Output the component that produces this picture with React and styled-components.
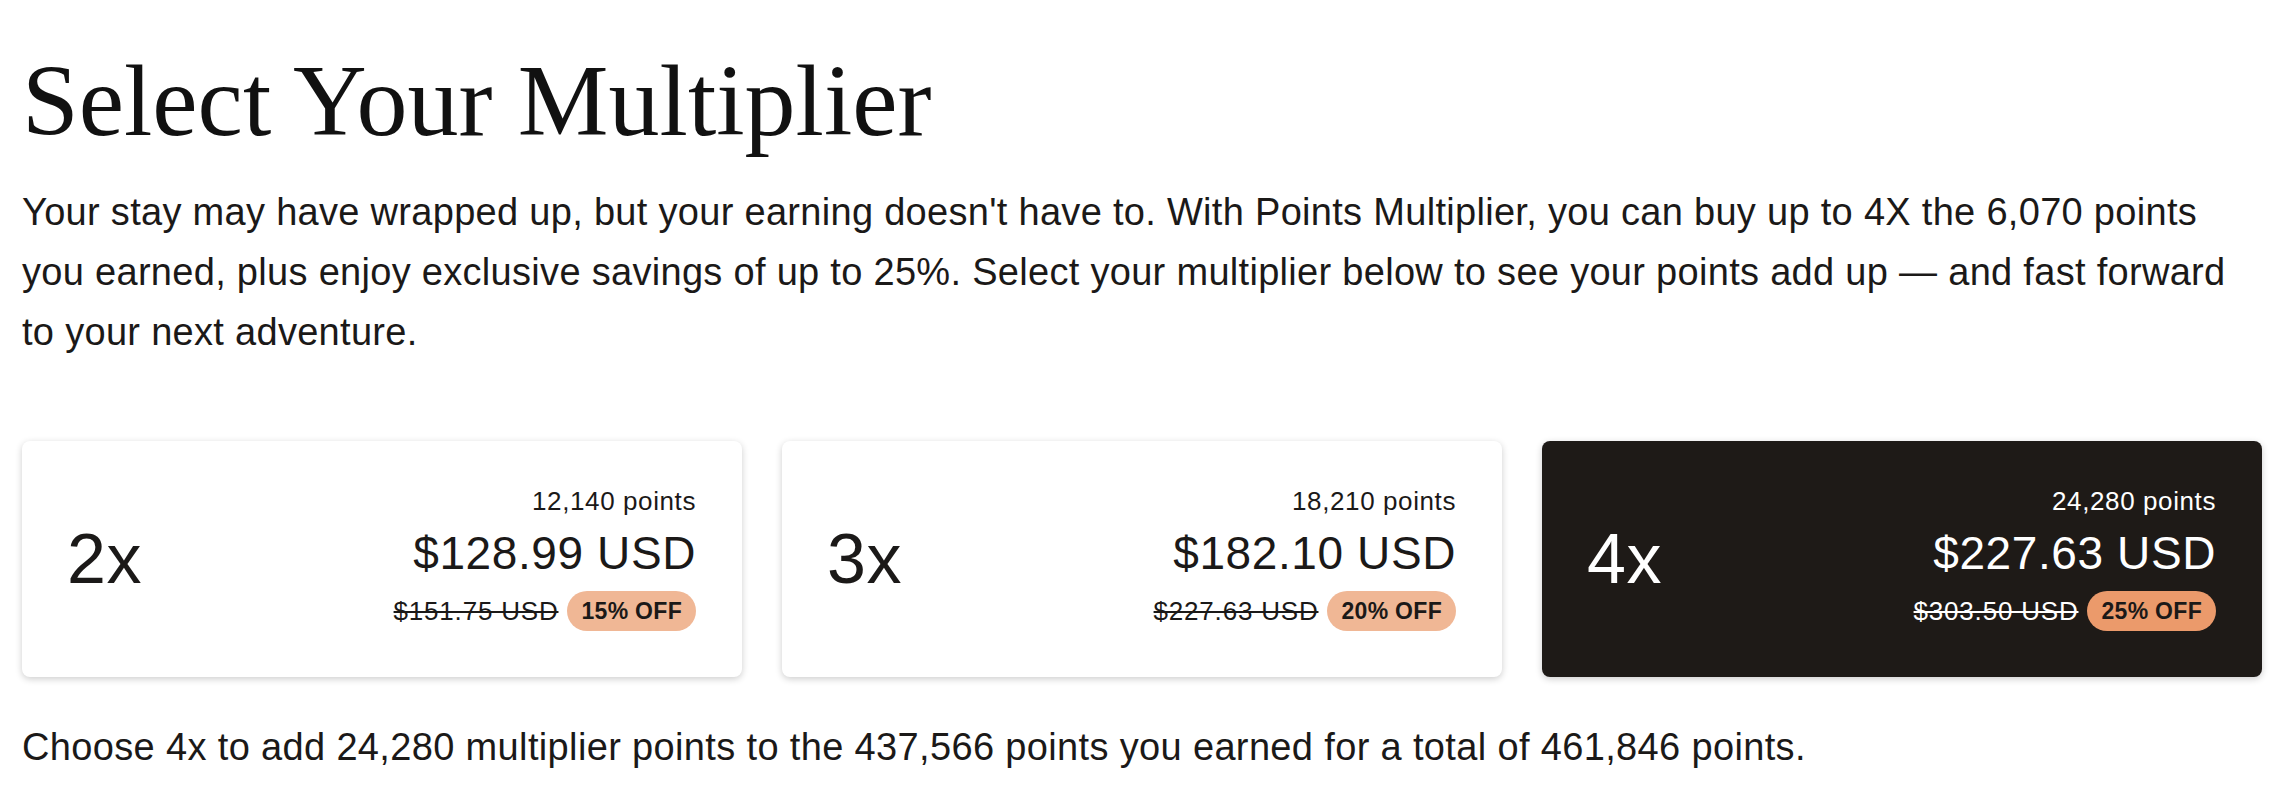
import React from 'react';
import styled, { createGlobalStyle } from 'styled-components';

const GlobalStyle = createGlobalStyle`
  html, body {
    margin: 0;
    padding: 0;
    background: #ffffff;
  }
  body {
    font-family: "Liberation Sans", Arial, sans-serif;
    color: #1b1918;
  }
`;

const Page = styled.main`
  padding: 41px 22px 30px;
  box-sizing: border-box;
  width: 100%;
`;

const Title = styled.h1`
  font-family: "Liberation Serif", "Times New Roman", serif;
  font-weight: 400;
  font-size: 102px;
  line-height: 120px;
  margin: 0;
  color: #111;
`;

const Intro = styled.p`
  font-size: 38px;
  line-height: 60px;
  letter-spacing: 0.3px;
  margin: 21px 0 0;
`;

const Options = styled.section`
  display: grid;
  grid-template-columns: repeat(3, 1fr);
  gap: 40px;
  margin-top: 79px;
`;

const Card = styled.button`
  all: unset;
  box-sizing: border-box;
  height: 236px;
  display: flex;
  align-items: center;
  justify-content: space-between;
  padding: 0 46px 0 45px;
  border-radius: 8px;
  cursor: pointer;
  background: ${p => (p.$selected ? '#1e1a17' : '#ffffff')};
  color: ${p => (p.$selected ? '#ffffff' : '#1b1918')};
  box-shadow: 0 2px 7px rgba(0, 0, 0, 0.2);
  font-family: "Liberation Sans", Arial, sans-serif;
`;

const Multiple = styled.span`
  font-size: 70px;
  line-height: 1;
  letter-spacing: 0.5px;
`;

const Pricing = styled.div`
  display: flex;
  flex-direction: column;
  align-items: flex-end;
  gap: 12px;
`;

const Points = styled.span`
  font-size: 26px;
  line-height: 28px;
  letter-spacing: 0.6px;
`;

const Price = styled.span`
  font-size: 46px;
  line-height: 52px;
  letter-spacing: 0.6px;
`;

const Savings = styled.div`
  display: flex;
  align-items: center;
  gap: 9px;
  height: 40px;
`;

const Original = styled.s`
  font-size: 26px;
  line-height: 28px;
  letter-spacing: 0.8px;
`;

const Badge = styled.span`
  display: inline-flex;
  align-items: center;
  height: 40px;
  padding: 0 14px;
  border-radius: 20px;
  font-size: 23px;
  font-weight: 700;
  letter-spacing: 0.3px;
  color: #1b1918;
  background: ${p => (p.$strong ? '#eb9a6b' : '#f0b795')};
`;

const Summary = styled.p`
  font-size: 38px;
  line-height: 60px;
  letter-spacing: 0.35px;
  margin: 40px 0 0;
`;

const options = [
  { mult: '2x', points: '12,140', price: '$128.99 USD', was: '$151.75 USD', off: '15% OFF' },
  { mult: '3x', points: '18,210', price: '$182.10 USD', was: '$227.63 USD', off: '20% OFF' },
  { mult: '4x', points: '24,280', price: '$227.63 USD', was: '$303.50 USD', off: '25% OFF' },
];

export default function App() {
  const selected = '4x';
  return (
    <>
      <GlobalStyle />
      <Page>
        <Title>Select Your Multiplier</Title>
        <Intro>
          Your stay may have wrapped up, but your earning doesn't have to. With Points
          Multiplier, you can buy up to 4X the 6,070 points you earned, plus enjoy exclusive
          savings of up to 25%. Select your multiplier below to see your points add up — and
          fast forward to your next adventure.
        </Intro>
        <Options>
          {options.map(o => {
            const isSel = o.mult === selected;
            return (
              <Card key={o.mult} $selected={isSel}>
                <Multiple>{o.mult}</Multiple>
                <Pricing>
                  <Points>{o.points} points</Points>
                  <Price>{o.price}</Price>
                  <Savings>
                    <Original>{o.was}</Original>
                    <Badge $strong={isSel}>{o.off}</Badge>
                  </Savings>
                </Pricing>
              </Card>
            );
          })}
        </Options>
        <Summary>
          Choose 4x to add 24,280 multiplier points to the 437,566 points you earned for a
          total of 461,846 points.
        </Summary>
      </Page>
    </>
  );
}
